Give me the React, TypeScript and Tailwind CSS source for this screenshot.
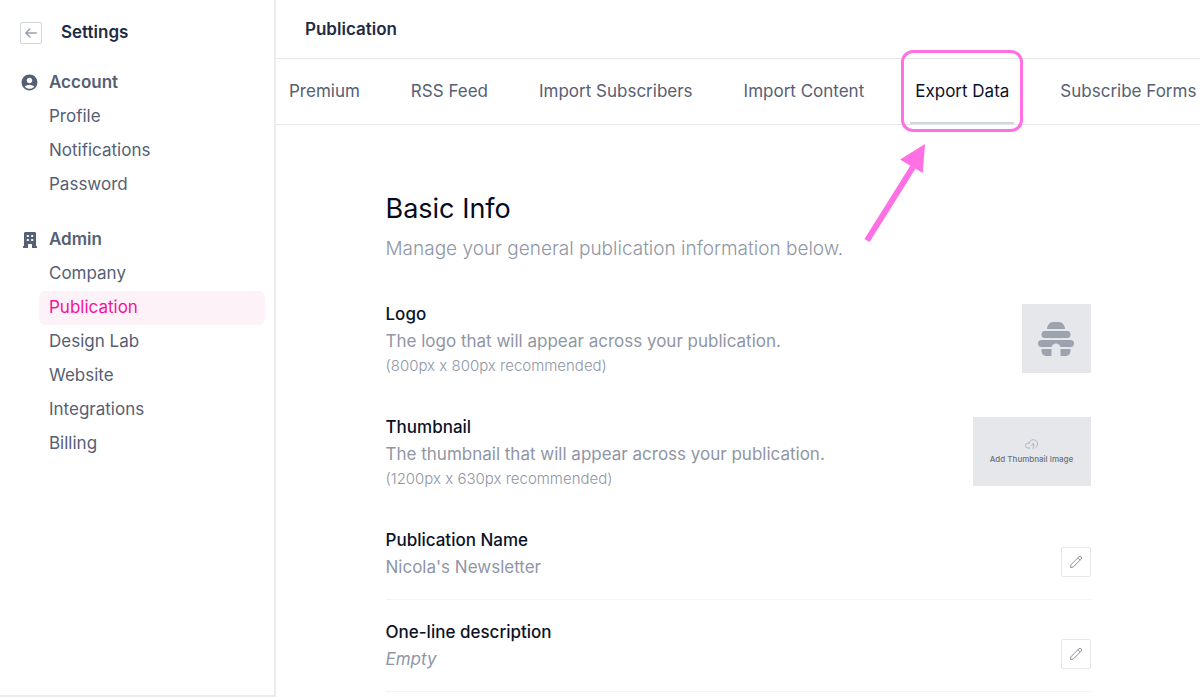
import { useState } from "react";
import type { ReactNode } from "react";
import clsx from "clsx";
import { MdAccountCircle } from "react-icons/md";

type NavGroup = {
  title: string;
  icon: ReactNode;
  items: string[];
};

const NAV_GROUPS: NavGroup[] = [
  {
    title: "Account",
    icon: <MdAccountCircle className="h-[19px] w-[19px]" />,
    items: ["Profile", "Notifications", "Password"],
  },
  {
    title: "Admin",
    icon: <BuildingIcon />,
    items: ["Company", "Publication", "Design Lab", "Website", "Integrations", "Billing"],
  },
];

const TABS = ["Premium", "RSS Feed", "Import Subscribers", "Import Content", "Export Data", "Subscribe Forms"];

function BuildingIcon() {
  return (
    <svg viewBox="0 0 14 16" className="h-4 w-3.5" fill="currentColor" aria-hidden="true">
      <path
        fillRule="evenodd"
        d="M1 1.5C1 .7 1.6 0 2.4 0h9.2C12.4 0 13 .7 13 1.5V14h.4a.6.6 0 0 1 .6.6V16H9v-3c0-.6-.4-1-1-1H6c-.6 0-1 .4-1 1v3H0v-1.400c0-.3.3-.6.6-.6H1zM3.800 3v2h2V3zm4.400 0v2h2V3zM3.800 7v2h2V7zm4.400 0v2h2V7z"
      />
    </svg>
  );
}

function HiveLogo() {
  return (
    <svg viewBox="0 0 36 36" className="h-9 w-9" aria-hidden="true">
      <g fill="#9ca3af">
        <path d="M9 8c0-3.6 2.6-7 6.400-7h5.200C24.400 1 27 4.400 27 8z" />
        <path d="M6.500 10h23c2 0 3 1.500 3 3.500s-1 3.500-3 3.500h-23c-2 0-3-1.500-3-3.500s1-3.500 3-3.500z" />
        <rect x="0" y="19" width="36" height="7" rx="3.500" />
        <path d="M3.500 28h29v1.500c0 3.300-2 5.500-5.200 5.500H8.700c-3.200 0-5.200-2.200-5.200-5.500z" />
      </g>
      <path d="M13.500 36v-9a4.500 4.500 0 0 1 9 0v9z" fill="#e5e7eb" />
    </svg>
  );
}

function CloudUploadIcon() {
  return (
    <svg
      viewBox="0 0 14 12"
      className="h-3 w-3.5"
      fill="none"
      stroke="#9ca3af"
      strokeLinecap="round"
      strokeLinejoin="round"
      aria-hidden="true"
    >
      <path d="M5 10H3.200A2.500 2.500 0 0 1 3 5c.300 0 .7 0 1 .2M4 5.200a4.400 4.400 0 1 1 6.600 4.600M8.200 10.800V5.800M6.300 7.500l1.900-1.900 1.900 1.900" strokeWidth="0.7" />
    </svg>
  );
}

function PencilIcon() {
  return (
    <svg viewBox="0 0 14 14" className="h-3.5 w-3.5" fill="none" stroke="#8b93a3" strokeLinejoin="round" aria-hidden="true">
      <path d="M1.500 12.500l.4-2.700 8-8a1.600 1.600 0 0 1 2.300 2.300l-8 8zM8.900 2.800l2.300 2.300" />
    </svg>
  );
}

function PointerArrow() {
  return (
    <svg
      viewBox="0 0 62 98"
      className="pointer-events-none absolute top-[85px] right-[88px] h-[98px] w-[62px]"
      aria-hidden="true"
    >
      <path d="M3 96.500L49 23" stroke="#ff70e5" strokeWidth="6" />
      <path d="M61 0L36 15.500 58.700 29z" fill="#ff70e5" />
    </svg>
  );
}

function Sidebar({ current, onSelect }: { current: string; onSelect: (item: string) => void }) {
  return (
    <aside className="w-[276px] shrink-0 border-r-2 border-b-2 border-[#ebecee]">
      <div className="flex h-[65px] items-center gap-[19px] pl-5">
        <button
          type="button"
          aria-label="Back"
          className="flex h-[22px] w-[22px] items-center justify-center rounded-xs border border-gray-300 text-gray-400"
        >
          <svg viewBox="0 0 12 10" className="h-2.5 w-3" fill="none" stroke="currentColor" strokeWidth="1.500" strokeLinecap="round" strokeLinejoin="round">
            <path d="M11.200 5H1M4.800 1L.8 5l4 4" />
          </svg>
        </button>
        <h1 className="font-semibold text-[#1f2a44]">Settings</h1>
      </div>
      {NAV_GROUPS.map((group) => (
        <nav key={group.title} aria-label={group.title} className="mb-5 pr-[9px] pl-5">
          <h2 className="flex h-[35px] items-center font-semibold text-[#566074]">
            <span className="mr-2.5 flex w-[19px] justify-center">{group.icon}</span>
            {group.title}
          </h2>
          <ul className="pl-[19px]">
            {group.items.map((item) => (
              <li key={item}>
                <a
                  href={`#${item.toLowerCase().replace(" ", "-")}`}
                  onClick={() => onSelect(item)}
                  aria-current={item === current ? "page" : undefined}
                  className={clsx(
                    "flex h-[34px] items-center rounded-md pl-2.5",
                    item === current ? "bg-pink-50 text-[#f0149a]" : "text-[#566074]"
                  )}
                >
                  {item}
                </a>
              </li>
            ))}
          </ul>
        </nav>
      ))}
    </aside>
  );
}

function TabBar({ current, onSelect }: { current: string; onSelect: (tab: string) => void }) {
  return (
    <div role="tablist" className="flex h-[66px] gap-[41px] border-b border-gray-200 pl-2">
      {TABS.map((tab) => (
        <button
          key={tab}
          type="button"
          role="tab"
          aria-selected={tab === current}
          onClick={() => onSelect(tab)}
          className={clsx(
            "relative border-b-2 px-[5px] pt-0.5 whitespace-nowrap",
            tab === current ? "border-gray-300 text-[#0b1228]" : "border-transparent text-[#566074]"
          )}
        >
          {tab}
          {tab === "Export Data" && (
            <>
              <span className="pointer-events-none absolute -inset-x-[9px] -top-[9px] -bottom-2.5 rounded-xl border-3 border-[#ff70e5]" />
              <PointerArrow />
            </>
          )}
        </button>
      ))}
    </div>
  );
}

function ImageField({ title, text, hint, children }: { title: string; text: string; hint: string; children: ReactNode }) {
  return (
    <div className="mb-[37px] flex items-start justify-between">
      <div>
        <h3 className="leading-[27px] font-medium text-[#0b1228]">{title}</h3>
        <p className="leading-[27px] text-[#8f96a5]">{text}</p>
        <p className="text-[15px] leading-[22px] font-light text-[#8f96a5]">{hint}</p>
      </div>
      {children}
    </div>
  );
}

function TextField({ title, value }: { title: string; value?: string }) {
  return (
    <div className="mb-[19px] flex items-end justify-between border-b border-gray-100 pb-[18px]">
      <div>
        <h3 className="leading-[27px] font-medium text-[#0b1228]">{title}</h3>
        <p className={clsx("leading-[27px] text-[#8f96a5]", !value && "italic")}>{value ?? "Empty"}</p>
      </div>
      <button
        type="button"
        aria-label={`Edit ${title}`}
        className="mb-1 flex h-[30px] w-[30px] items-center justify-center rounded-xs border border-gray-200"
      >
        <PencilIcon />
      </button>
    </div>
  );
}

export default function App() {
  const [page, setPage] = useState("Publication");
  const [tab, setTab] = useState("Export Data");

  return (
    <div className="flex min-h-screen bg-white font-['Inter',sans-serif] text-[17px]">
      <Sidebar current={page} onSelect={setPage} />
      <main className="h-screen min-w-0 flex-1 overflow-hidden">
        <header className="flex h-[59px] items-center border-b border-gray-200 pt-0.5 pl-[29px]">
          <h2 className="font-semibold text-[#1f2a44]">{page}</h2>
        </header>
        <TabBar current={tab} onSelect={setTab} />
        <section className="mx-auto max-w-[705px] pt-16">
          <h2 className="text-[27px] leading-10 text-[#060b1c]">Basic Info</h2>
          <p className="mb-8 text-[19px] leading-10 font-light text-[#8f96a5]">
            Manage your general publication information below.
          </p>
          <ImageField
            title="Logo"
            text="The logo that will appear across your publication."
            hint="(800px x 800px recommended)"
          >
            <button
              type="button"
              aria-label="Change logo"
              className="mt-[3px] flex h-[69px] w-[69px] items-center justify-center bg-gray-200"
            >
              <HiveLogo />
            </button>
          </ImageField>
          <ImageField
            title="Thumbnail"
            text="The thumbnail that will appear across your publication."
            hint="(1200px x 630px recommended)"
          >
            <button
              type="button"
              className="mt-[3px] flex h-[69px] w-[118px] flex-col items-center justify-center gap-[3px] bg-gray-200 text-[8px] leading-3 font-medium text-gray-500"
            >
              <CloudUploadIcon />
              Add Thumbnail Image
            </button>
          </ImageField>
          <TextField title="Publication Name" value="Nicola's Newsletter" />
          <TextField title="One-line description" />
        </section>
      </main>
    </div>
  );
}
